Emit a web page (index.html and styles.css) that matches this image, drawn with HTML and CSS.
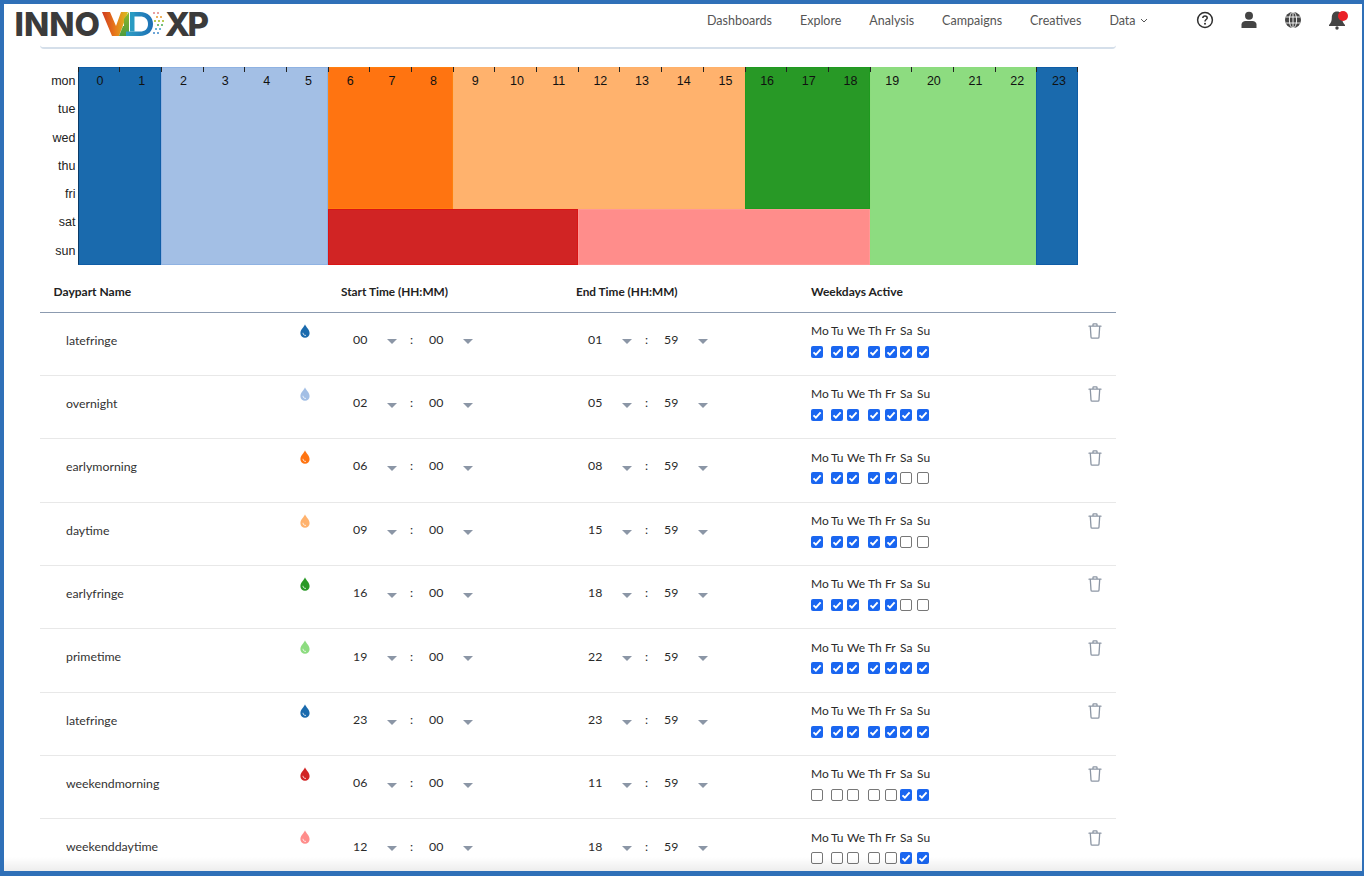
FILE: index.html
```html
<!DOCTYPE html>
<html lang="en">
<head>
<meta charset="utf-8">
<title>Innovid XP - Dayparts</title>
<link rel="stylesheet" href="styles.css">
</head>
<body>
<div class="frame">
  <svg width="0" height="0" class="defs">
    <defs>
      <symbol id="drop" viewBox="0 0 10 14"><path d="M5 .3C5.600 2.600 9.600 5.600 9.600 9.200A4.600 4.600 0 0 1 .4 9.200C.4 5.600 4.400 2.600 5 .3Z" fill="currentColor"/><path d="M3 8.800C3 10.600 4.200 11.600 6 11.400" fill="none" stroke="#fff" stroke-opacity=".75" stroke-width="1"/></symbol>
      <symbol id="trash" viewBox="0 0 14 16"><path d="M1 3.200H13M5 3V1.400C5 1 5.300.8 5.600.8H8.400C8.700.8 9 1 9 1.400V3M2.300 3.400 3 14C3 14.700 3.500 15.200 4.200 15.200H9.800C10.500 15.200 11 14.700 11 14L11.700 3.400" fill="none" stroke="#8d97a5" stroke-width="1.300" stroke-linecap="round" stroke-linejoin="round"/></symbol>
      <symbol id="tick" viewBox="0 0 12 12"><path d="M2.500 6.300 4.900 8.700 9.600 3.300" fill="none" stroke="#fff" stroke-width="1.900"/></symbol>
      <symbol id="caret" viewBox="0 0 10 5"><path d="M0 0H10L5 5Z" fill="#8b96a6"/></symbol>
      <linearGradient id="vgrad" x1="0" x2="1" y1="0" y2="0"><stop offset="0" stop-color="#cf3a20"/><stop offset=".5" stop-color="#e8791a"/><stop offset="1" stop-color="#d8c021"/></linearGradient>
      <linearGradient id="igrad" x1="0" x2="0" y1="0" y2="1"><stop offset="0" stop-color="#8fb82e"/><stop offset="1" stop-color="#4f9c3c"/></linearGradient>
      <linearGradient id="dgrad" x1="0" x2="1" y1="0" y2="0"><stop offset="0" stop-color="#2f9fc4"/><stop offset="1" stop-color="#1c6fb5"/></linearGradient>
    </defs>
  </svg>
  <header class="topbar">
    <div class="logo">
      <span class="logo-a">INNO</span>
      <svg class="logo-mark" width="64" height="26" viewBox="0 0 64 26">
        <path d="M0 1H8L14 15 19 1H26L17 25H10Z" fill="url(#vgrad)"/>
        <path d="M27 1V25H17L21 15H22V8Z" fill="url(#igrad)"/>
        <path d="M28 1H38C46 1 51 6 51 13S46 25 38 25H24V20.500H38C43 20.500 46 18 46 13S43 5.500 38 5.500H28Z" fill="url(#dgrad)"/>
        <path d="M28 1H32.500V20.500H28Z" fill="#2a9bc2"/>
        <g fill="#e9a0a0"><rect x="51" y="1" width="2" height="2"/><rect x="55" y="1" width="2" height="2"/></g>
        <g fill="#efb15e"><rect x="54" y="5" width="2" height="2"/><rect x="58" y="5" width="2" height="2"/></g>
        <g fill="#b9cc55"><rect x="52" y="9" width="2" height="2"/><rect x="56" y="9" width="2" height="2"/><rect x="60" y="9" width="2" height="2"/></g>
        <g fill="#76bf7a"><rect x="55" y="13" width="2" height="2"/><rect x="59" y="13" width="2" height="2"/></g>
        <g fill="#6ab7d6"><rect x="53" y="17" width="2" height="2"/><rect x="57" y="17" width="2" height="2"/></g>
        <g fill="#6ea6d8"><rect x="51" y="21" width="2" height="2"/><rect x="55" y="21" width="2" height="2"/></g>
      </svg>
      <span class="logo-b">XP</span>
    </div>
    <nav class="nav">
      <a>Dashboards</a><a>Explore</a><a>Analysis</a><a>Campaigns</a><a>Creatives</a>
      <a class="nav-data">Data <svg width="8" height="5" viewBox="0 0 8 5"><path d="M1 1 4 4 7 1" fill="none" stroke="#555" stroke-width="1"/></svg></a>
    </nav>
    <div class="tools">
      <svg width="18" height="18" viewBox="0 0 18 18"><circle cx="9" cy="9" r="7.400" fill="none" stroke="#2f2f2f" stroke-width="1.500"/><path d="M6.800 7C6.900 5.700 7.800 5 9 5 10.300 5 11.200 5.800 11.200 6.900 11.200 8.500 9 8.600 9 10.400" fill="none" stroke="#2f2f2f" stroke-width="1.500"/><circle cx="9" cy="12.800" r="1" fill="#2f2f2f"/></svg>
      <svg width="16" height="18" viewBox="0 0 16 18"><circle cx="8" cy="4.800" r="4" fill="#444"/><path d="M.5 17V13.500C.5 11.200 2.500 10 4.500 10H11.500C13.500 10 15.500 11.200 15.500 13.500V17Z" fill="#444"/></svg>
      <svg width="18" height="18" viewBox="0 0 18 18"><circle cx="9" cy="9" r="8" fill="#444"/><g fill="none" stroke="#fff" stroke-width=".9"><ellipse cx="9" cy="9" rx="3.600" ry="8"/><path d="M9 1V17M1.500 6H16.500M1.500 12H16.500"/></g></svg>
      <span class="bell">
        <svg width="18" height="20" viewBox="0 0 18 20"><path d="M9 1.500C5.500 1.500 3.800 4.200 3.800 7.500 3.800 11.500 2.800 13 1 15V16H17V15C15.200 13 14.200 11.500 14.200 7.500 14.200 4.200 12.500 1.500 9 1.500Z" fill="#444"/><circle cx="9" cy="18" r="1.700" fill="#444"/></svg>
        <i class="badge"></i>
      </span>
    </div>
  </header>
  <main class="content">
    <div class="panel-edge"></div>
    <section class="chart-row">
      <ul class="days"><li>mon</li><li>tue</li><li>wed</li><li>thu</li><li>fri</li><li>sat</li><li>sun</li></ul>
      <div class="chart">
        <div class="heat">
          <div class="block b-late1"></div>
          <div class="block b-over"></div>
          <div class="block b-em"></div>
          <div class="block b-day"></div>
          <div class="block b-ef"></div>
          <div class="block b-wm"></div>
          <div class="block b-wd"></div>
          <div class="block b-prime"></div>
          <div class="block b-late2"></div>
        </div>
        <div class="hours">
          <span>0</span><span>1</span><span>2</span><span>3</span><span>4</span><span>5</span><span>6</span><span>7</span><span>8</span><span>9</span><span>10</span><span>11</span><span>12</span><span>13</span><span>14</span><span>15</span><span>16</span><span>17</span><span>18</span><span>19</span><span>20</span><span>21</span><span>22</span><span>23</span>
        </div>
      </div>
    </section>
    <section class="table">
      <div class="row head">
        <div class="name">Daypart Name</div><div class="swatch"></div><div class="time">Start Time (HH:MM)</div><div class="time">End Time (HH:MM)</div><div class="week">Weekdays Active</div>
      </div>

      <div class="row">
        <div class="name">latefringe</div>
        <div class="swatch c-late"><svg width="10" height="14"><use href="#drop"/></svg></div>
        <div class="time"><span class="val">00</span><svg class="caret"><use href="#caret"/></svg><span class="colon">:</span><span class="val">00</span><svg class="caret"><use href="#caret"/></svg></div>
        <div class="time"><span class="val">01</span><svg class="caret"><use href="#caret"/></svg><span class="colon">:</span><span class="val">59</span><svg class="caret"><use href="#caret"/></svg></div>
        <div class="week">
          <div class="wk"><span>Mo</span><span>Tu</span><span>We</span><span>Th</span><span>Fr</span><span>Sa</span><span>Su</span></div>
          <div class="wk"><span><svg class="box on"><use href="#tick"/></svg></span><span><svg class="box on"><use href="#tick"/></svg></span><span><svg class="box on"><use href="#tick"/></svg></span><span><svg class="box on"><use href="#tick"/></svg></span><span><svg class="box on"><use href="#tick"/></svg></span><span><svg class="box on"><use href="#tick"/></svg></span><span><svg class="box on"><use href="#tick"/></svg></span></div>
        </div>
        <div class="del"><svg width="14" height="16"><use href="#trash"/></svg></div>
      </div>

      <div class="row">
        <div class="name">overnight</div>
        <div class="swatch c-over"><svg width="10" height="14"><use href="#drop"/></svg></div>
        <div class="time"><span class="val">02</span><svg class="caret"><use href="#caret"/></svg><span class="colon">:</span><span class="val">00</span><svg class="caret"><use href="#caret"/></svg></div>
        <div class="time"><span class="val">05</span><svg class="caret"><use href="#caret"/></svg><span class="colon">:</span><span class="val">59</span><svg class="caret"><use href="#caret"/></svg></div>
        <div class="week">
          <div class="wk"><span>Mo</span><span>Tu</span><span>We</span><span>Th</span><span>Fr</span><span>Sa</span><span>Su</span></div>
          <div class="wk"><span><svg class="box on"><use href="#tick"/></svg></span><span><svg class="box on"><use href="#tick"/></svg></span><span><svg class="box on"><use href="#tick"/></svg></span><span><svg class="box on"><use href="#tick"/></svg></span><span><svg class="box on"><use href="#tick"/></svg></span><span><svg class="box on"><use href="#tick"/></svg></span><span><svg class="box on"><use href="#tick"/></svg></span></div>
        </div>
        <div class="del"><svg width="14" height="16"><use href="#trash"/></svg></div>
      </div>

      <div class="row">
        <div class="name">earlymorning</div>
        <div class="swatch c-em"><svg width="10" height="14"><use href="#drop"/></svg></div>
        <div class="time"><span class="val">06</span><svg class="caret"><use href="#caret"/></svg><span class="colon">:</span><span class="val">00</span><svg class="caret"><use href="#caret"/></svg></div>
        <div class="time"><span class="val">08</span><svg class="caret"><use href="#caret"/></svg><span class="colon">:</span><span class="val">59</span><svg class="caret"><use href="#caret"/></svg></div>
        <div class="week">
          <div class="wk"><span>Mo</span><span>Tu</span><span>We</span><span>Th</span><span>Fr</span><span>Sa</span><span>Su</span></div>
          <div class="wk"><span><svg class="box on"><use href="#tick"/></svg></span><span><svg class="box on"><use href="#tick"/></svg></span><span><svg class="box on"><use href="#tick"/></svg></span><span><svg class="box on"><use href="#tick"/></svg></span><span><svg class="box on"><use href="#tick"/></svg></span><span><i class="box off"></i></span><span><i class="box off"></i></span></div>
        </div>
        <div class="del"><svg width="14" height="16"><use href="#trash"/></svg></div>
      </div>

      <div class="row">
        <div class="name">daytime</div>
        <div class="swatch c-day"><svg width="10" height="14"><use href="#drop"/></svg></div>
        <div class="time"><span class="val">09</span><svg class="caret"><use href="#caret"/></svg><span class="colon">:</span><span class="val">00</span><svg class="caret"><use href="#caret"/></svg></div>
        <div class="time"><span class="val">15</span><svg class="caret"><use href="#caret"/></svg><span class="colon">:</span><span class="val">59</span><svg class="caret"><use href="#caret"/></svg></div>
        <div class="week">
          <div class="wk"><span>Mo</span><span>Tu</span><span>We</span><span>Th</span><span>Fr</span><span>Sa</span><span>Su</span></div>
          <div class="wk"><span><svg class="box on"><use href="#tick"/></svg></span><span><svg class="box on"><use href="#tick"/></svg></span><span><svg class="box on"><use href="#tick"/></svg></span><span><svg class="box on"><use href="#tick"/></svg></span><span><svg class="box on"><use href="#tick"/></svg></span><span><i class="box off"></i></span><span><i class="box off"></i></span></div>
        </div>
        <div class="del"><svg width="14" height="16"><use href="#trash"/></svg></div>
      </div>

      <div class="row">
        <div class="name">earlyfringe</div>
        <div class="swatch c-ef"><svg width="10" height="14"><use href="#drop"/></svg></div>
        <div class="time"><span class="val">16</span><svg class="caret"><use href="#caret"/></svg><span class="colon">:</span><span class="val">00</span><svg class="caret"><use href="#caret"/></svg></div>
        <div class="time"><span class="val">18</span><svg class="caret"><use href="#caret"/></svg><span class="colon">:</span><span class="val">59</span><svg class="caret"><use href="#caret"/></svg></div>
        <div class="week">
          <div class="wk"><span>Mo</span><span>Tu</span><span>We</span><span>Th</span><span>Fr</span><span>Sa</span><span>Su</span></div>
          <div class="wk"><span><svg class="box on"><use href="#tick"/></svg></span><span><svg class="box on"><use href="#tick"/></svg></span><span><svg class="box on"><use href="#tick"/></svg></span><span><svg class="box on"><use href="#tick"/></svg></span><span><svg class="box on"><use href="#tick"/></svg></span><span><i class="box off"></i></span><span><i class="box off"></i></span></div>
        </div>
        <div class="del"><svg width="14" height="16"><use href="#trash"/></svg></div>
      </div>

      <div class="row">
        <div class="name">primetime</div>
        <div class="swatch c-prime"><svg width="10" height="14"><use href="#drop"/></svg></div>
        <div class="time"><span class="val">19</span><svg class="caret"><use href="#caret"/></svg><span class="colon">:</span><span class="val">00</span><svg class="caret"><use href="#caret"/></svg></div>
        <div class="time"><span class="val">22</span><svg class="caret"><use href="#caret"/></svg><span class="colon">:</span><span class="val">59</span><svg class="caret"><use href="#caret"/></svg></div>
        <div class="week">
          <div class="wk"><span>Mo</span><span>Tu</span><span>We</span><span>Th</span><span>Fr</span><span>Sa</span><span>Su</span></div>
          <div class="wk"><span><svg class="box on"><use href="#tick"/></svg></span><span><svg class="box on"><use href="#tick"/></svg></span><span><svg class="box on"><use href="#tick"/></svg></span><span><svg class="box on"><use href="#tick"/></svg></span><span><svg class="box on"><use href="#tick"/></svg></span><span><svg class="box on"><use href="#tick"/></svg></span><span><svg class="box on"><use href="#tick"/></svg></span></div>
        </div>
        <div class="del"><svg width="14" height="16"><use href="#trash"/></svg></div>
      </div>

      <div class="row">
        <div class="name">latefringe</div>
        <div class="swatch c-late"><svg width="10" height="14"><use href="#drop"/></svg></div>
        <div class="time"><span class="val">23</span><svg class="caret"><use href="#caret"/></svg><span class="colon">:</span><span class="val">00</span><svg class="caret"><use href="#caret"/></svg></div>
        <div class="time"><span class="val">23</span><svg class="caret"><use href="#caret"/></svg><span class="colon">:</span><span class="val">59</span><svg class="caret"><use href="#caret"/></svg></div>
        <div class="week">
          <div class="wk"><span>Mo</span><span>Tu</span><span>We</span><span>Th</span><span>Fr</span><span>Sa</span><span>Su</span></div>
          <div class="wk"><span><svg class="box on"><use href="#tick"/></svg></span><span><svg class="box on"><use href="#tick"/></svg></span><span><svg class="box on"><use href="#tick"/></svg></span><span><svg class="box on"><use href="#tick"/></svg></span><span><svg class="box on"><use href="#tick"/></svg></span><span><svg class="box on"><use href="#tick"/></svg></span><span><svg class="box on"><use href="#tick"/></svg></span></div>
        </div>
        <div class="del"><svg width="14" height="16"><use href="#trash"/></svg></div>
      </div>

      <div class="row">
        <div class="name">weekendmorning</div>
        <div class="swatch c-wm"><svg width="10" height="14"><use href="#drop"/></svg></div>
        <div class="time"><span class="val">06</span><svg class="caret"><use href="#caret"/></svg><span class="colon">:</span><span class="val">00</span><svg class="caret"><use href="#caret"/></svg></div>
        <div class="time"><span class="val">11</span><svg class="caret"><use href="#caret"/></svg><span class="colon">:</span><span class="val">59</span><svg class="caret"><use href="#caret"/></svg></div>
        <div class="week">
          <div class="wk"><span>Mo</span><span>Tu</span><span>We</span><span>Th</span><span>Fr</span><span>Sa</span><span>Su</span></div>
          <div class="wk"><span><i class="box off"></i></span><span><i class="box off"></i></span><span><i class="box off"></i></span><span><i class="box off"></i></span><span><i class="box off"></i></span><span><svg class="box on"><use href="#tick"/></svg></span><span><svg class="box on"><use href="#tick"/></svg></span></div>
        </div>
        <div class="del"><svg width="14" height="16"><use href="#trash"/></svg></div>
      </div>

      <div class="row">
        <div class="name">weekenddaytime</div>
        <div class="swatch c-wd"><svg width="10" height="14"><use href="#drop"/></svg></div>
        <div class="time"><span class="val">12</span><svg class="caret"><use href="#caret"/></svg><span class="colon">:</span><span class="val">00</span><svg class="caret"><use href="#caret"/></svg></div>
        <div class="time"><span class="val">18</span><svg class="caret"><use href="#caret"/></svg><span class="colon">:</span><span class="val">59</span><svg class="caret"><use href="#caret"/></svg></div>
        <div class="week">
          <div class="wk"><span>Mo</span><span>Tu</span><span>We</span><span>Th</span><span>Fr</span><span>Sa</span><span>Su</span></div>
          <div class="wk"><span><i class="box off"></i></span><span><i class="box off"></i></span><span><i class="box off"></i></span><span><i class="box off"></i></span><span><i class="box off"></i></span><span><svg class="box on"><use href="#tick"/></svg></span><span><svg class="box on"><use href="#tick"/></svg></span></div>
        </div>
        <div class="del"><svg width="14" height="16"><use href="#trash"/></svg></div>
      </div>
    </section>
  </main>
  <div class="fade"></div>
</div>
</body>
</html>
```
FILE: styles.css
```css
* { box-sizing: border-box; }
html, body { margin: 0; height: 100%; }
body { font-family: Lato, "Liberation Sans", sans-serif; color: #2b2b2b; background: #fff; overflow: hidden; }
.defs { display: block; height: 0; position: absolute; }
.frame { position: relative; width: 1364px; height: 876px; border: 4px solid #2f70b8; border-bottom-width: 5px; border-right-width: 2px; overflow: hidden; background: #fff; }
.fade { position: absolute; left: 0; right: 0; bottom: 0; height: 14px; background: linear-gradient(rgba(0,0,0,0), rgba(0,0,0,.07)); }
.topbar { height: 40px; display: flex; align-items: center; }
.logo { display: flex; align-items: center; margin-left: 10.5px; width: 649.5px; font: 800 33px/32px Inter, "Liberation Sans", sans-serif; color: #3b3b3b; }
.logo-a { width: 87.5px; white-space: nowrap; letter-spacing: 0; }
.logo-b { letter-spacing: -2.5px; margin-left: -1px; }
.logo-mark { flex: none; }
.nav { display: flex; gap: 28px; margin-left: 43px; margin-bottom: 8px; font-size: 12.5px; color: #555; }
.nav-data svg { margin-left: 1px; vertical-align: 2px; }
.tools { display: flex; align-items: center; gap: 27px; margin-left: 48px; margin-bottom: 8px; }
.bell { position: relative; display: flex; margin-left: -1px; }
.badge { position: absolute; top: 1px; right: -2px; width: 10px; height: 10px; border-radius: 50%; background: #ea2027; }
.content { margin-left: 36px; width: 1076px; }
.panel-edge { height: 5px; border-bottom: 2px solid #d5dfea; border-radius: 0 0 4px 4px; }
.chart-row { display: flex; margin-top: 18px; height: 198px; }
.days { list-style: none; margin: 0; padding: 0 2px 0 0; width: 37.5px; font: 12.5px/28.3px "Liberation Sans", sans-serif; text-align: right; color: #222; }
.chart { position: relative; width: 1000.5px; }
.heat { display: grid; height: 100%; grid-template-columns: repeat(24, 1fr); grid-template-rows: repeat(5, 28.4px) repeat(2, 28px); }
.hours { position: absolute; inset: 0 0 auto 0; display: grid; grid-template-columns: repeat(24, 1fr); font: 12.5px/28px "Liberation Sans", sans-serif; color: #111; text-align: center; }
.hours span { padding-left: 3.5px; position: relative; }
.hours span::before { content: ""; position: absolute; left: 0; top: 0; width: 1px; height: 5px; background: #222; }
.hours span:last-child::after { content: ""; position: absolute; right: 0; top: 0; width: 1px; height: 5px; background: #222; }
.block { border: 1px solid; }
.b-late1 { grid-column: 1 / span 2; grid-row: 1 / span 7; background: #1a6aad; border-color: #0f5da6; border-left-color: #0b3a66; }
.b-over { grid-column: 3 / span 4; grid-row: 1 / span 7; background: #a3bfe5; border-color: #8fb2e2; }
.b-em { grid-column: 7 / span 3; grid-row: 1 / span 5; background: #ff7411; border-color: #ff7f0e; }
.b-day { grid-column: 10 / span 7; grid-row: 1 / span 5; background: #ffb26d; border-color: #ffb169; }
.b-ef { grid-column: 17 / span 3; grid-row: 1 / span 5; background: #289926; border-color: #1f9a1f; }
.b-wm { grid-column: 7 / span 6; grid-row: 6 / span 2; background: #d12424; border-color: #db1414; }
.b-wd { grid-column: 13 / span 7; grid-row: 6 / span 2; background: #ff8d8b; border-color: #ff9896; }
.b-prime { grid-column: 20 / span 4; grid-row: 1 / span 7; background: #8ddc80; border-color: #8cdc7d; }
.b-late2 { grid-column: 24; grid-row: 1 / span 7; background: #1a6aad; border-color: #0f5da6; }
.row { display: flex; height: 63.35px; border-bottom: 1px solid #e8e8e8; font-size: 12.3px; position: relative; }
.row.head { height: 47.5px; padding-top: 6px; border-bottom: 1px solid #8c9bb0; font-weight: 700; color: #222; align-items: center; font-size: 12px; }
.name { width: 260px; padding-left: 26px; padding-top: 20px; color: #333; }
.head .name { padding: 0 0 0 13.5px; color: #222; }
.swatch { width: 41px; padding-top: 11px; }
.head .swatch { padding: 0; }
.c-late { color: #1a6aad; }
.c-over { color: #a3bfe5; }
.c-em { color: #ff7411; }
.c-day { color: #ffb26d; }
.c-ef { color: #289926; }
.c-prime { color: #8ddc80; }
.c-wm { color: #d12424; }
.c-wd { color: #ff8d8b; }
.time { width: 235px; display: flex; align-items: flex-start; padding-top: 19.3px; padding-left: 12px; }
.head .time { padding: 0; display: block; font-size: 11.8px; }
.val { width: 16px; }
.caret { width: 10px; height: 5px; margin: 7.7px 0 0 18px; }
.colon { margin-left: 13px; width: 19px; }
.week { width: 277px; padding-top: 10.5px; }
.head .week { padding: 0; }
.wk { display: flex; height: 21px; font-size: 12px; }
.wk:first-child { height: 22.5px; }
.wk span { display: block; }
.wk span:nth-child(1) { width: 20px; }
.wk span:nth-child(2) { width: 16px; }
.wk span:nth-child(3) { width: 21px; }
.wk span:nth-child(4) { width: 17px; }
.wk span:nth-child(5) { width: 15px; }
.wk span:nth-child(6) { width: 17px; }
.wk span:nth-child(7) { width: 17px; }
.box { display: block; width: 12px; height: 12px; border-radius: 2px; }
.box.on { background: #1a66f0; }
.box.off { border: 1px solid #777; background: #fff; }
.del { position: absolute; right: 14px; top: 10.5px; }
```
